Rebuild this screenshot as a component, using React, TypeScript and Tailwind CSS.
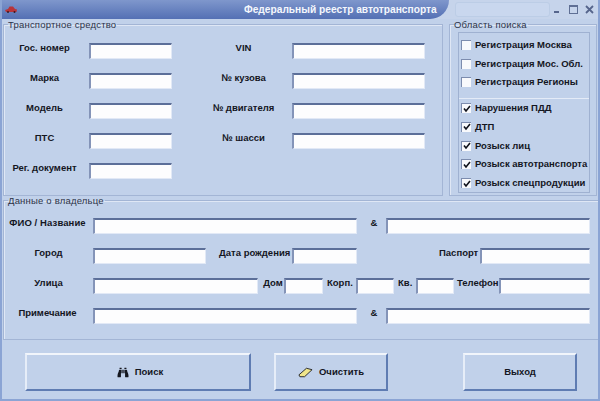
import { FaBinoculars } from 'react-icons/fa';

const labelClass = "font-['Liberation_Sans',sans-serif] text-[9.5px] font-bold text-[#14161f] whitespace-nowrap text-center leading-[16px]";

const Input = ({ className }: { className: string }) => (
  <input
    type="text"
    className={`h-4 shrink-0 border-t-2 border-l-2 border-r border-b border-t-[#5c6f99] border-l-[#8494b8] border-r-[#e2e9f6] border-b-[#e2e9f6] bg-[#fdfdfe] outline-none ${className}`}
  />
);

const Label = ({ text, className }: { text: string; className: string }) => (
  <span className={`${labelClass} shrink-0 mt-[-3px] ${className}`}>{text}</span>
);

const Group = ({ title, className, children }: { title: string; className: string; children: React.ReactNode }) => (
  <fieldset className={`border border-[#a3b5d5] shadow-[inset_1px_1px_0_#dfe7f5] ${className}`}>
    <legend className="ml-[4px] px-0 pr-[1px] h-[11px] font-['Liberation_Sans',sans-serif] text-[9.5px] leading-[11px] text-[#2c3348] tracking-[0.2px]">
      {title}
    </legend>
    {children}
  </fieldset>
);

const CheckRow = ({ text, checked }: { text: string; checked?: boolean }) => (
  <div className="flex items-center gap-[4px] h-[10px]">
    <span className="w-[10px] h-[10px] shrink-0 bg-[#f8f9fc] border-t border-l border-[#7c8cae] flex items-center justify-center">
      {checked && (
        <svg width="8" height="8" viewBox="0 0 8 8">
          <path d="M1 3.5 L3 6 L7 1" fill="none" stroke="#10131c" strokeWidth="1.6" />
        </svg>
      )}
    </span>
    <span className={`${labelClass} !leading-[12px] !text-left`}>{text}</span>
  </div>
);

const BigButton = ({ className, children }: { className: string; children: React.ReactNode }) => (
  <button className={`h-[38px] shrink-0 flex items-center justify-center gap-[6px] bg-[#c1d1ea] border-2 border-t-[#f1f5fb] border-l-[#e6edf8] border-r-[#5f7cb2] border-b-[#5f7cb2] ${labelClass} ${className}`}>
    {children}
  </button>
);

export default function App() {
  return (
    <div className="w-[600px] h-[401px] bg-[#c1d1ea] flex flex-col overflow-hidden border-x-2 border-b-2 border-x-[#8ba4d4] border-b-[#8ba4d4] relative">
      {/* title bar */}
      <div className="h-[19px] shrink-0 flex -mx-[2px] bg-[#c6d4eb]">
        <div className="w-[449px] shrink-0 h-full rounded-br-[24px] bg-gradient-to-b from-[#7f97cc] to-[#5470b4] flex items-center relative">
          <svg className="ml-[5px] shrink-0" width="12" height="7" viewBox="0 0 12 7">
            <path d="M0 4 L3 3 L4.5 0.5 L8 0.5 L10 3 L12 3.5 L11.5 6 L1 6 Z" fill="#b8343a" />
            <circle cx="3" cy="6" r="1" fill="#3a1720" />
            <circle cx="9.5" cy="6" r="1" fill="#3a1720" />
          </svg>
          <span className="ml-[227px] font-['Liberation_Sans',sans-serif] text-[10.2px] font-bold text-[#f4f7fc] whitespace-nowrap">
            Федеральный реестр автотранспорта
          </span>
        </div>
        <div className="ml-[6px] mt-[2px] w-[95px] h-[15px] rounded-[3px] border border-[#bccde6] bg-[#c9d7ee]" />
        <div className="flex items-center">
          <span className="ml-[4px] mt-[5px] w-[5px] h-[2px] bg-[#56658c]" />
          <span className="ml-[10px] w-[9px] h-[9px] border border-t-2 border-[#5f6f94]" />
          <svg className="ml-[7px]" width="9" height="9" viewBox="0 0 9 9">
            <path d="M1 1 L8 8 M8 1 L1 8" stroke="#56658c" strokeWidth="1.8" />
          </svg>
        </div>
      </div>

      {/* top groups */}
      <div className="flex h-[177px] shrink-0 mx-[1px] gap-[6px]">
        <Group title="Транспортное средство" className="w-[440px] h-full shrink-0">
          <div className="flex pt-[13px]">
            <div className="flex flex-col gap-[14px]">
              {['Гос. номер', 'Марка', 'Модель', 'ПТС', 'Рег. документ'].map((text) => (
                <div key={text} className="flex items-start">
                  <Label text={text} className="w-[81px]" />
                  <Input className="w-[83px] ml-[4px]" />
                </div>
              ))}
            </div>
            <div className="flex flex-col gap-[14px] ml-[32px]">
              {['VIN', '№ кузова', '№ двигателя', '№ шасси'].map((text) => (
                <div key={text} className="flex items-start">
                  <Label text={text} className="w-[79px]" />
                  <Input className="w-[133px] ml-[9px]" />
                </div>
              ))}
            </div>
          </div>
        </Group>
        <Group title="Область поиска" className="w-[148px] h-full shrink-0">
          <div className="mt-[2px] ml-[8px] w-[132px] h-[161px] border border-[#9fb1d1] flex flex-col">
            <div className="h-[66px] shrink-0 border-b border-[#e4ebf7] pt-[7px] pl-[2px] flex flex-col gap-[8.5px]">
              <CheckRow text="Регистрация  Москва" />
              <CheckRow text="Регистрация Мос. Обл." />
              <CheckRow text="Регистрация Регионы" />
            </div>
            <div className="pt-[4px] pl-[2px] flex flex-col gap-[8.75px]">
              <CheckRow text="Нарушения ПДД" checked />
              <CheckRow text="ДТП" checked />
              <CheckRow text="Розыск лиц" checked />
              <CheckRow text="Розыск автотранспорта" checked />
              <CheckRow text="Розыск спецпродукции" checked />
            </div>
          </div>
        </Group>
      </div>

      {/* owner group */}
      <Group title="Данные о владельце" className="mt-[-1px] h-[145px] shrink-0 ml-[1px] border-r-0">
        <div className="flex flex-col gap-[14px] pt-[12px]">
          <div className="flex items-start">
            <Label text="ФИО / Название" className="w-[87px] mr-[2px] tracking-[0.1px]" />
            <Input className="w-[264px]" />
            <Label text="&" className="w-[30px] pl-[4px]" />
            <Input className="w-[204px] ml-[-1px]" />
          </div>
          <div className="flex items-start">
            <Label text="Город" className="w-[89px]" />
            <Input className="w-[113px]" />
            <Label text="Дата рождения" className="ml-[13px] w-[69px]" />
            <Input className="w-[65px] ml-[4px]" />
            <Label text="Паспорт" className="ml-[82px] w-[37px]" />
            <Input className="w-[110px] ml-[4px]" />
          </div>
          <div className="flex items-start">
            <Label text="Улица" className="w-[89px]" />
            <Input className="w-[165px]" />
            <Label text="Дом" className="w-[20px] ml-[5px]" />
            <Input className="w-[39px] ml-[1px]" />
            <Label text="Корп." className="w-[24px] ml-[4px]" />
            <Input className="w-[38px] ml-[5px]" />
            <Label text="Кв." className="w-[14px] ml-[4px]" />
            <Input className="w-[38px] ml-[4px]" />
            <Label text="Телефон" className="w-[38px] ml-[3px]" />
            <Input className="w-[91px] ml-[4px]" />
          </div>
          <div className="flex items-start">
            <Label text="Примечание" className="w-[87px]" />
            <Input className="w-[264px] ml-[2px]" />
            <Label text="&" className="w-[30px] pl-[4px]" />
            <Input className="w-[204px] ml-[-1px]" />
          </div>
        </div>
      </Group>

      {/* buttons */}
      <div className="flex mt-[13px] ml-[23px]">
        <BigButton className="w-[226px] pl-[4px]">
          <FaBinoculars className="w-[12px] h-[11px] text-[#15171f]" />
          Поиск
        </BigButton>
        <BigButton className="w-[114px] ml-[23px]">
          <svg width="15" height="11" viewBox="0 0 16 11">
            <path d="M1 8 L9 1 L15 2.5 L7 10 L2 10 Z" fill="#efe58a" stroke="#23242a" strokeWidth="1" />
          </svg>
          Очистить
        </BigButton>
        <BigButton className="w-[114px] ml-[75px]">Выход</BigButton>
      </div>
    </div>
  );
}
